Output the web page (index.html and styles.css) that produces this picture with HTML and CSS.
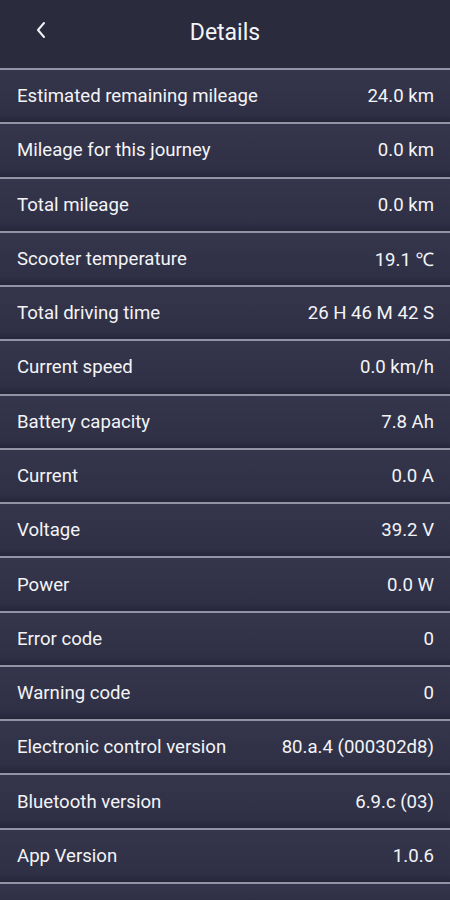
FILE: index.html
```html
<!DOCTYPE html>
<html lang="en">
<head>
    <meta charset="UTF-8">
    <meta name="viewport" content="width=device-width, initial-scale=1.0">
    <title>Details</title>
    <link rel="stylesheet" href="styles.css">
</head>
<body>
    <div class="header">
        <span class="back">
            <svg width="14" height="20" viewBox="0 0 14 20"><path d="M10 3 L4 10 L10 17" fill="none" stroke="#f2f2f5" stroke-width="2" stroke-linecap="round" stroke-linejoin="round"/></svg>
        </span>
        <h1>Details</h1>
    </div>
    <ul class="details">
        <li><span>Estimated remaining mileage</span><span>24.0 km</span></li>
        <li><span>Mileage for this journey</span><span>0.0 km</span></li>
        <li><span>Total mileage</span><span>0.0 km</span></li>
        <li><span>Scooter temperature</span><span>19.1 ℃</span></li>
        <li><span>Total driving time</span><span>26 H 46 M 42 S</span></li>
        <li><span>Current speed</span><span>0.0 km/h</span></li>
        <li><span>Battery capacity</span><span>7.8 Ah</span></li>
        <li><span>Current</span><span>0.0 A</span></li>
        <li><span>Voltage</span><span>39.2 V</span></li>
        <li><span>Power</span><span>0.0 W</span></li>
        <li><span>Error code</span><span>0</span></li>
        <li><span>Warning code</span><span>0</span></li>
        <li><span>Electronic control version</span><span>80.a.4 (000302d8)</span></li>
        <li><span>Bluetooth version</span><span>6.9.c (03)</span></li>
        <li><span>App Version</span><span>1.0.6</span></li>
        <li class="empty"></li>
    </ul>
</body>
</html>
```

FILE: styles.css
```css
body {
    margin: 0;
    background-color: #2a2b3d;
    font-family: Roboto, "Noto Sans", sans-serif;
    color: #f4f4f7;
}
.header {
    height: 68px;
    display: flex;
    align-items: center;
    justify-content: center;
    position: relative;
}
.header h1 {
    margin: 0;
    font-size: 23px;
    font-weight: 400;
    margin-top: -4px;
}
.back {
    position: absolute;
    left: 34px;
    top: 20px;
}
.details {
    list-style: none;
    margin: 0;
    padding: 0;
}
.details li {
    height: 54.27px;
    box-sizing: border-box;
    border-top: 2px solid #9293a4;
    background: linear-gradient(#35364c, #2f3045 85%, #25263a);
    display: flex;
    align-items: center;
    justify-content: space-between;
    padding: 0 16px 0 17px;
    font-size: 18.6px;
}
.details li.empty {
    height: 20px;
}
```
